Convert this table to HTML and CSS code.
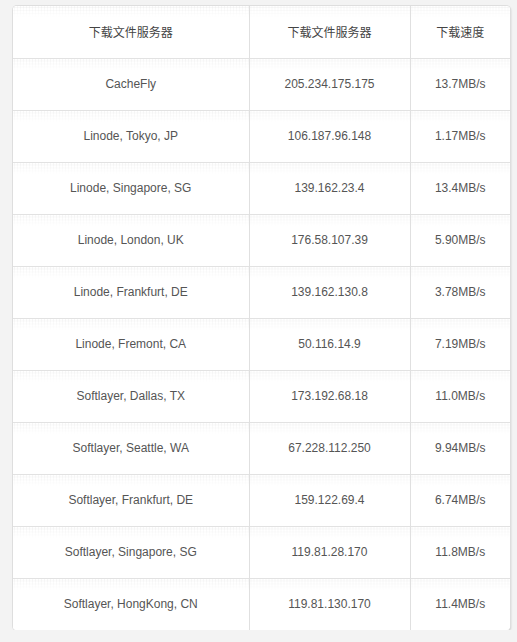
FILE: index.html
```html
<!DOCTYPE html>
<html>
<head>
<meta charset="utf-8">
<link rel="stylesheet" href="styles.css">
</head>
<body>
<div class="card">
<table class="speed">
<colgroup><col class="c1"><col class="c2"><col class="c3"></colgroup>
<thead>
<tr><th>下载文件服务器</th><th>下载文件服务器</th><th>下载速度</th></tr>
</thead>
<tbody>
<tr><td>CacheFly</td><td>205.234.175.175</td><td>13.7MB/s</td></tr>
<tr><td>Linode, Tokyo, JP</td><td>106.187.96.148</td><td>1.17MB/s</td></tr>
<tr><td>Linode, Singapore, SG</td><td>139.162.23.4</td><td>13.4MB/s</td></tr>
<tr><td>Linode, London, UK</td><td>176.58.107.39</td><td>5.90MB/s</td></tr>
<tr><td>Linode, Frankfurt, DE</td><td>139.162.130.8</td><td>3.78MB/s</td></tr>
<tr><td>Linode, Fremont, CA</td><td>50.116.14.9</td><td>7.19MB/s</td></tr>
<tr><td>Softlayer, Dallas, TX</td><td>173.192.68.18</td><td>11.0MB/s</td></tr>
<tr><td>Softlayer, Seattle, WA</td><td>67.228.112.250</td><td>9.94MB/s</td></tr>
<tr><td>Softlayer, Frankfurt, DE</td><td>159.122.69.4</td><td>6.74MB/s</td></tr>
<tr><td>Softlayer, Singapore, SG</td><td>119.81.28.170</td><td>11.8MB/s</td></tr>
<tr><td>Softlayer, HongKong, CN</td><td>119.81.130.170</td><td>11.4MB/s</td></tr>
</tbody>
</table>
</div>
</body>
</html>
```
FILE: styles.css
```css
html, body {
  margin: 0;
  padding: 0;
}
body {
  background: #f3f3f3;
  font-family: "Liberation Sans", Arial, "Noto Sans CJK SC", sans-serif;
  font-size: 12px;
  color: #555;
}
.card {
  margin: 6px 0 0 13px;
  width: 497px;
  background: #fff;
  border-radius: 4px;
  box-shadow: 0 0 0 1px #dedede, 1px 1px 2px rgba(0,0,0,0.18);
  overflow: hidden;
}
.speed {
  width: 100%;
  border-collapse: collapse;
  table-layout: fixed;
}
.c1 { width: 236px; }
.c2 { width: 161px; }
.c3 { width: 100px; }
.speed th,
.speed td {
  height: 49px;
  padding: 0 0 2px;
  text-align: center;
  vertical-align: middle;
  font-weight: normal;
  border-top: 1px solid #e2e2e2;
  border-left: 1px solid #e0e0e0;
  background-color: #fff;
  background-image:
    linear-gradient(to bottom, rgba(255,255,255,0.2) 0, #fff 11px),
    radial-gradient(circle, #ececec 0.8px, transparent 1.2px);
  background-size: 100% 100%, 3px 3px;
  background-repeat: no-repeat, repeat;
}
.speed th {
  color: #444;
  font-size: 12px;
  border-top: none;
  height: 50px;
}
.speed th:first-child,
.speed td:first-child {
  border-left: none;
}
```
